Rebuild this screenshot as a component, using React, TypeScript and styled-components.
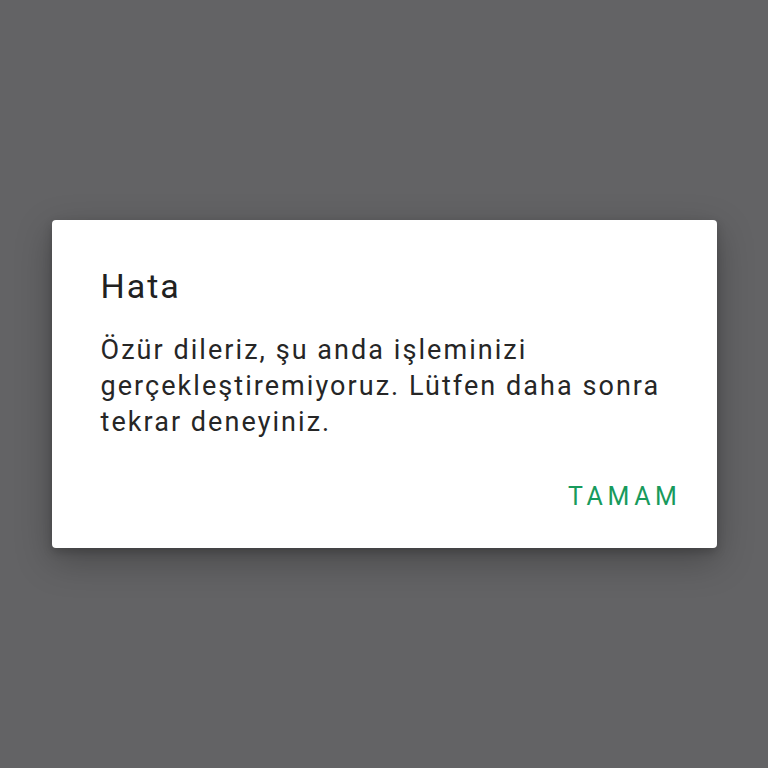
import styled, { createGlobalStyle } from "styled-components";

const GlobalStyle = createGlobalStyle`
  html, body {
    margin: 0;
    padding: 0;
    background-color: #636365;
  }
  body {
    font-family: Roboto, "Noto Sans", "Liberation Sans", sans-serif;
  }
`;

const Screen = styled.div`
  display: flex;
  align-items: center;
  justify-content: center;
  width: 100%;
  min-height: 100vh;
`;

const Dialog = styled.div`
  display: flex;
  flex-direction: column;
  width: 665px;
  box-sizing: border-box;
  padding: 46px 35px 33px 49px;
  background-color: #ffffff;
  border-radius: 4px;
  box-shadow: 0 12px 36px rgba(0, 0, 0, 0.28), 0 4px 10px rgba(0, 0, 0, 0.18);
`;

const Title = styled.h2`
  margin: 0;
  font-size: 34px;
  line-height: 40px;
  font-weight: 400;
  letter-spacing: 2px;
  color: #212121;
`;

const Message = styled.p`
  margin: 26px 0 0;
  padding-right: 13px;
  font-size: 27px;
  line-height: 36px;
  font-weight: 400;
  letter-spacing: 2.05px;
  color: #262626;
`;

const Actions = styled.div`
  display: flex;
  justify-content: flex-end;
  margin-top: 39px;
`;

const TextButton = styled.button`
  border: none;
  background: none;
  padding: 0;
  font-family: inherit;
  font-size: 25px;
  line-height: 36px;
  font-weight: 400;
  letter-spacing: 4.6px;
  color: #189a5c;
  cursor: pointer;
`;

function App() {
  return (
    <>
      <GlobalStyle />
      <Screen>
        <Dialog>
          <Title>Hata</Title>
          <Message>
            Özür dileriz, şu anda işleminizi gerçekleştiremiyoruz. Lütfen daha
            sonra tekrar deneyiniz.
          </Message>
          <Actions>
            <TextButton>TAMAM</TextButton>
          </Actions>
        </Dialog>
      </Screen>
    </>
  );
}

export default App;
